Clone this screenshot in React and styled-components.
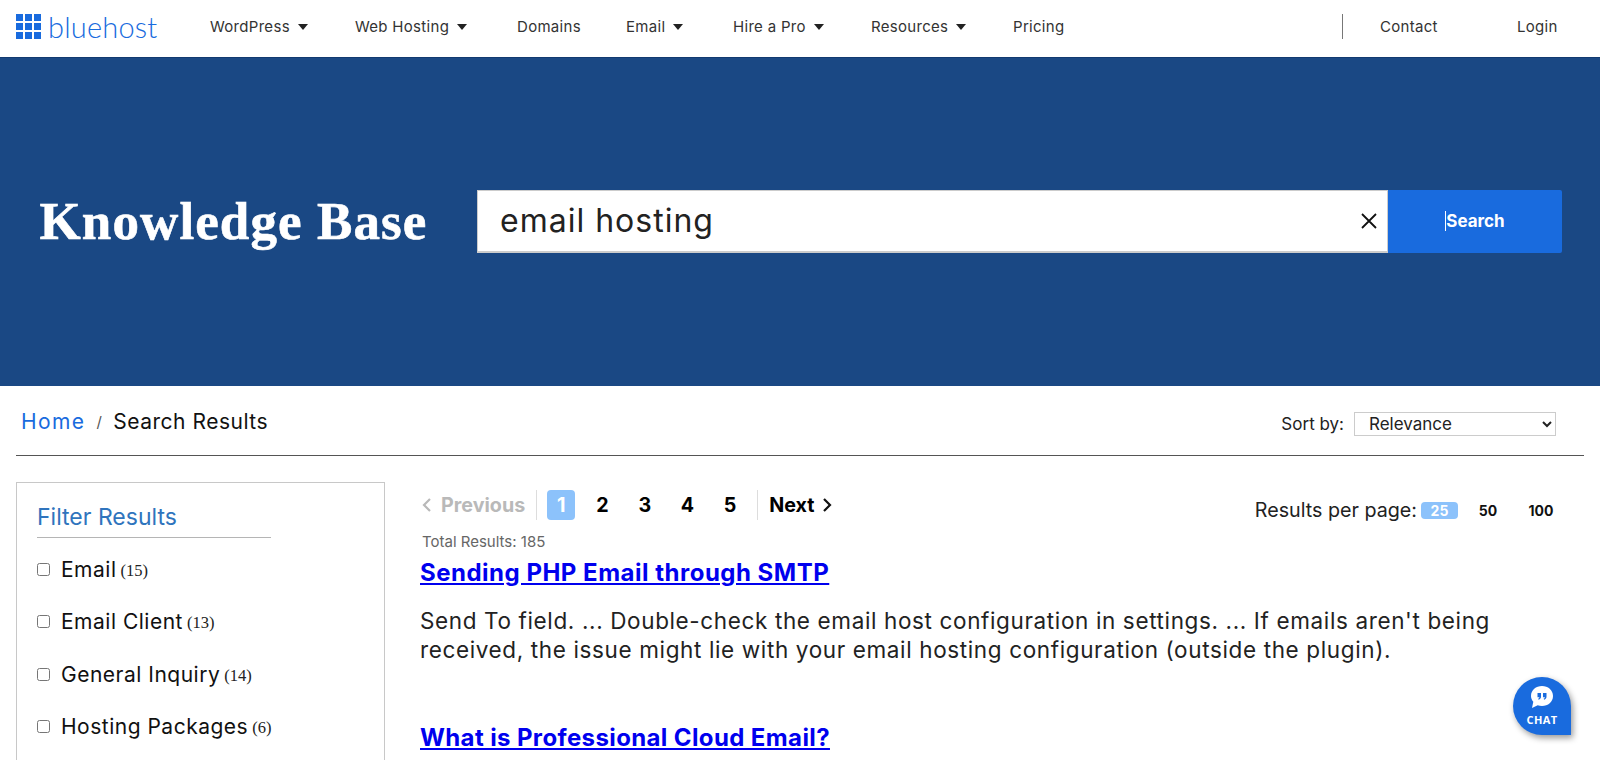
import React from "react";
import styled, { createGlobalStyle } from "styled-components";

const Global = createGlobalStyle`
  html, body { margin: 0; padding: 0; background: #fff; }
  body { font-family: Inter, "Liberation Sans", sans-serif; color: #111; }
  #root { height: 760px; overflow: hidden; position: relative; }
`;

const Header = styled.header`
  height: 57px;
  display: flex;
  align-items: center;
  padding: 0 0 4px 16px;
  box-sizing: border-box;
`;
const Logo = styled.a`
  display: flex;
  align-items: center;
  width: 194px;
  gap: 7px;
  color: #196bde;
  font-family: Lato, sans-serif;
  font-weight: 300;
  font-size: 29px;
  letter-spacing: 0.2px;
`;
const Nav = styled.nav`
  display: flex;
  align-items: center;
`;
const NavItem = styled.a`
  width: ${(p) => p.$w}px;
  display: flex;
  align-items: center;
  gap: 8px;
  font-size: 15px;
  letter-spacing: 0.3px;
  color: #333;
  white-space: nowrap;
`;
const Caret = styled.span`
  width: 0;
  height: 0;
  border-left: 5.5px solid transparent;
  border-right: 5.5px solid transparent;
  border-top: 6px solid #222;
`;
const NavRight = styled.div`
  margin-left: 137px;
  height: 25px;
  display: flex;
  align-items: center;
  border-left: 1px solid #777;
  padding-left: 37px;
`;

const Hero = styled.section`
  height: 329px;
  background: #1a4884;
  border-top: 1px solid #123a70;
  box-sizing: border-box;
  display: flex;
  align-items: center;
  padding: 0 0 2px 39.5px;
`;
const HeroTitle = styled.h1`
  width: 437.5px;
  margin: 0;
  color: #fff;
  font-family: "Liberation Serif", serif;
  font-weight: 700;
  font-size: 53px;
  letter-spacing: 1.1px;
  -webkit-text-stroke: 0.6px #fff;
  white-space: nowrap;
`;
const SearchBar = styled.form`
  display: flex;
  height: 63px;
  margin: 0;
`;
const SearchField = styled.div`
  width: 911px;
  box-sizing: border-box;
  background: #fff;
  border: 1px solid #ccc;
  border-bottom-width: 2px;
  display: flex;
  align-items: center;
  justify-content: space-between;
  padding: 0 10px 0 22px;
  font-size: 32px;
  letter-spacing: 1px;
  color: #222;
`;
const SearchButton = styled.button`
  width: 174px;
  border: 0;
  border-radius: 0 2px 2px 0;
  background: #196bde;
  color: #fff;
  font: 700 17px Inter, sans-serif;
  padding: 0;
  display: flex;
  align-items: center;
  justify-content: center;
`;
const TextCursor = styled.span`
  width: 1px;
  height: 20px;
  background: #fff;
`;

const Crumbs = styled.div`
  height: 70px;
  margin: 0 16px;
  box-sizing: border-box;
  border-bottom: 1.5px solid #555;
  display: flex;
  align-items: center;
  justify-content: space-between;
  padding: 1px 28px 0 5px;
`;
const Trail = styled.div`
  display: flex;
  align-items: center;
  font-size: 21px;
  letter-spacing: 0.5px;
`;
const HomeLink = styled.a`
  color: #196bde;
  letter-spacing: 1.4px;
`;
const Slash = styled.span`
  margin: 0 11px;
  font-size: 15px;
  color: #555;
`;
const Sort = styled.label`
  display: flex;
  align-items: center;
  gap: 10px;
  margin-top: 6px;
  font-size: 17px;
  color: #222;
`;
const SortSelect = styled.select`
  width: 202px;
  height: 24px;
  box-sizing: border-box;
  background: #fff;
  border: 1px solid #ccc;
  padding-left: 10px;
  font: 17px Inter, sans-serif;
  color: #222;
`;

const Body = styled.div`
  display: flex;
  padding: 26px 16px 0;
  gap: 35px;
`;
const Sidebar = styled.aside`
  width: 369px;
  height: 400px;
  flex: none;
  box-sizing: border-box;
  border: 1px solid #c8c8c8;
  padding: 20px 20px;
`;
const FilterTitle = styled.h2`
  margin: 0 0 19px;
  width: 234px;
  padding-bottom: 6px;
  border-bottom: 1.5px solid #b5b5b5;
  color: #2f74bd;
  font-size: 23px;
  font-weight: 400;
`;
const FilterRow = styled.label`
  height: 52.5px;
  display: flex;
  align-items: center;
  margin-top: ${(p) => (p.$first ? "-14px" : "0")};
  font-size: 21px;
  letter-spacing: 0.5px;
  color: #111;
`;
const Box = styled.input`
  width: 13px;
  height: 13px;
  margin: 0 11px 0 0;
`;
const Count = styled.span`
  font-family: "Liberation Serif", serif;
  font-size: 16.5px;
  letter-spacing: 0;
  margin-left: 4px;
  margin-top: 3px;
  color: #222;
`;

const Main = styled.main`
  flex: 1;
  min-width: 0;
`;
const ResultBar = styled.div`
  display: flex;
  justify-content: space-between;
  align-items: center;
  height: 30px;
  margin-top: 8px;
`;
const Pager = styled.div`
  display: flex;
  align-items: center;
  font-size: 19.7px;
  font-weight: 700;
  padding-left: 1px;
`;
const PagerLink = styled.span`
  display: flex;
  align-items: center;
  gap: ${(p) => p.$gap}px;
  color: ${(p) => (p.$off ? "#b9b9b9" : "#000")};
`;
const PagerDivider = styled.span`
  width: 1px;
  height: 30px;
  background: #ddd;
  margin: ${(p) => p.$m};
`;
const PageNumber = styled.span`
  width: ${(p) => (p.$active ? 28 : 42.5)}px;
  height: 30px;
  display: flex;
  align-items: center;
  justify-content: center;
  border-radius: 4px;
  background: ${(p) => (p.$active ? "#8cc2fb" : "transparent")};
  color: ${(p) => (p.$active ? "#fff" : "#000")};
  margin-right: ${(p) => (p.$active ? 6 : 0)}px;
`;
const PerPage = styled.div`
  display: flex;
  align-items: center;
  padding-right: 29px;
  font-size: 19.7px;
  color: #222;
  margin-top: 10px;
`;
const PerOption = styled.span`
  width: ${(p) => p.$w}px;
  height: 17px;
  display: flex;
  align-items: center;
  justify-content: center;
  margin-left: ${(p) => p.$ml}px;
  border-radius: 4px;
  font-size: 14px;
  font-weight: 700;
  background: ${(p) => (p.$active ? "#8cc2fb" : "transparent")};
  color: ${(p) => (p.$active ? "#fff" : "#111")};
`;
const Total = styled.div`
  margin: 12px 0 0 2px;
  font-size: 15px;
  color: #666;
`;
const ResultLink = styled.a`
  display: block;
  margin-top: ${(p) => p.$top}px;
  font-size: 24px;
  letter-spacing: ${(p) => p.$ls}px;
  font-weight: 700;
  color: #0000ee;
  text-decoration: underline;
`;
const Snippet = styled.p`
  margin: 20px 0 0;
  width: 1100px;
  font-size: 22.5px;
  letter-spacing: 0.63px;
  line-height: 28.5px;
  color: #222;
`;

const Chat = styled.div`
  position: absolute;
  left: 1513px;
  top: 677px;
  width: 58px;
  height: 58px;
  background: #196bde;
  border-radius: 50% 50% 0 50%;
  box-shadow: 2px 3px 6px rgba(0, 0, 0, 0.4);
  display: flex;
  flex-direction: column;
  align-items: center;
  padding-top: 8px;
  box-sizing: border-box;
  color: #fff;
  font: 700 11px "Open Sans", sans-serif;
  letter-spacing: 0.4px;
  gap: 3px;
`;

const LogoMark = () => (
  <svg width="25" height="25" viewBox="0 0 25 25" fill="#196bde">
    {[0, 9, 18].flatMap((y) =>
      [0, 9, 18].map((x) => <rect key={`${x}-${y}`} x={x} y={y} width="7" height="7" />)
    )}
  </svg>
);
const Chevron = ({ left, color }) => (
  <svg width="11" height="16" viewBox="0 0 11 16" fill="none" stroke={color} strokeWidth="2.2">
    <path d={left ? "M9 2 3 8l6 6" : "M2 2l6 6-6 6"} />
  </svg>
);
const CloseIcon = () => (
  <svg width="16" height="16" viewBox="0 0 16 16" stroke="#111" strokeWidth="1.8">
    <path d="M1 1l14 14M15 1 1 15" />
  </svg>
);
const ChatIcon = () => (
  <svg width="24" height="24" viewBox="0 0 24 24">
    <path fill="#fff" d="M12 1c6 0 11 4 11 10s-5 10-11 10c-1.500 0-3-.3-4.300-.8L2 23l1.300-6.200C1.800 15.100 1 13.100 1 11 1 5 6 1 12 1z" />
    <path fill="#196bde" d="M7.500 8h3.500v3.500c0 1.700-.8 2.800-2.400 3.300l-.5-1c.8-.3 1.200-.8 1.300-1.500H7.500zM13 8h3.500v3.500c0 1.700-.8 2.800-2.400 3.300l-.5-1c.8-.3 1.200-.8 1.300-1.500H13z" />
  </svg>
);

const nav = [
  ["WordPress", 145, true],
  ["Web Hosting", 162, true],
  ["Domains", 109, false],
  ["Email", 107, true],
  ["Hire a Pro", 138, true],
  ["Resources", 142, true],
  ["Pricing", 192, false],
];
const filters = [
  ["Email", 15],
  ["Email Client", 13],
  ["General Inquiry", 14],
  ["Hosting Packages", 6],
];

export default function App() {
  return (
    <>
      <Global />
      <Header>
        <Logo>
          <LogoMark />
          bluehost
        </Logo>
        <Nav>
          {nav.map(([label, w, caret]) => (
            <NavItem key={label} $w={w}>
              {label}
              {caret && <Caret />}
            </NavItem>
          ))}
        </Nav>
        <NavRight>
          <NavItem $w={137}>Contact</NavItem>
          <NavItem $w={60}>Login</NavItem>
        </NavRight>
      </Header>
      <Hero>
        <HeroTitle>Knowledge Base</HeroTitle>
        <SearchBar>
          <SearchField>
            email hosting
            <CloseIcon />
          </SearchField>
          <SearchButton type="button">
            <TextCursor />
            Search
          </SearchButton>
        </SearchBar>
      </Hero>
      <Crumbs>
        <Trail>
          <HomeLink>Home</HomeLink>
          <Slash>/</Slash>
          Search Results
        </Trail>
        <Sort>
          Sort by:
          <SortSelect defaultValue="Relevance">
            <option>Relevance</option>
          </SortSelect>
        </Sort>
      </Crumbs>
      <Body>
        <Sidebar>
          <FilterTitle>Filter Results</FilterTitle>
          {filters.map(([label, n], i) => (
            <FilterRow key={label} $first={i === 0}>
              <Box type="checkbox" />
              {label}
              <Count>({n})</Count>
            </FilterRow>
          ))}
        </Sidebar>
        <Main>
          <ResultBar>
            <Pager>
              <PagerLink $off $gap={9}>
                <Chevron left color="#b9b9b9" />
                Previous
              </PagerLink>
              <PagerDivider $m="0 10px 0 11px" />
              <PageNumber $active>1</PageNumber>
              {[2, 3, 4, 5].map((n) => (
                <PageNumber key={n}>{n}</PageNumber>
              ))}
              <PagerDivider $m="0 11px 0 6px" />
              <PagerLink $gap={8}>
                Next
                <Chevron color="#111" />
              </PagerLink>
            </Pager>
            <PerPage>
              Results per page:
              <PerOption $active $w={37} $ml={4}>25</PerOption>
              <PerOption $w={20} $ml={20}>50</PerOption>
              <PerOption $w={28} $ml={29}>100</PerOption>
            </PerPage>
          </ResultBar>
          <Total>Total Results: 185</Total>
          <ResultLink $top={7} $ls={0.5}>Sending PHP Email through SMTP</ResultLink>
          <Snippet>
            Send To field. ... Double-check the email host configuration in settings. ... If emails aren't being
            received, the issue might lie with your email hosting configuration (outside the plugin).
          </Snippet>
          <ResultLink $top={59} $ls={0.38}>What is Professional Cloud Email?</ResultLink>
        </Main>
      </Body>
      <Chat>
        <ChatIcon />
        CHAT
      </Chat>
    </>
  );
}
